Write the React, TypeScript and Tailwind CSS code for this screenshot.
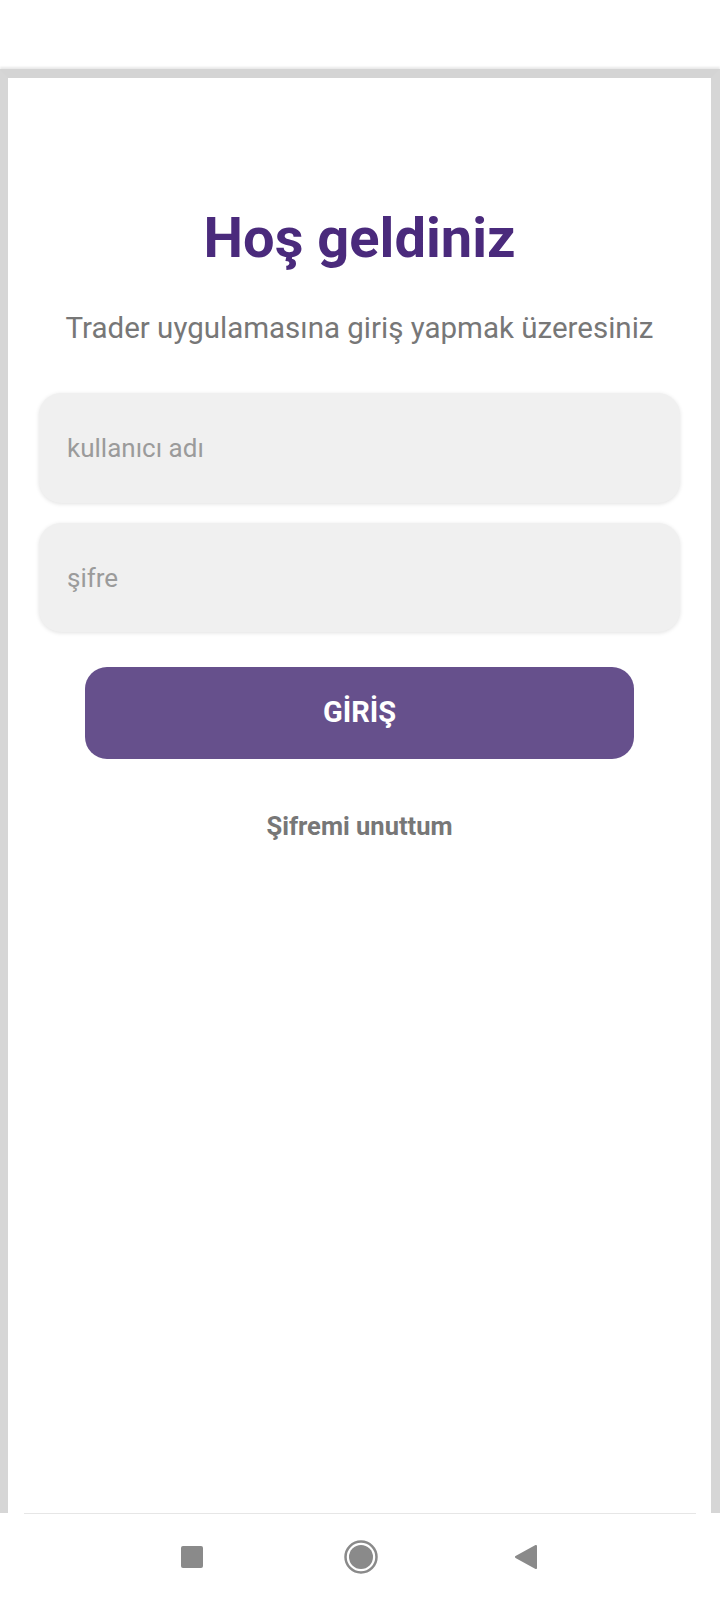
const App = () => {
  return (
    <div className="flex h-[1600px] w-[720px] flex-col bg-white font-['Roboto',sans-serif]">
      <div className="h-[69px] shrink-0 bg-white" />

      {/* device frame */}
      <div className="flex flex-1 flex-col border-x-[8px] border-t-[9px] border-r-[9px] border-x-[#d6d6d6] border-t-[#d4d4d4] bg-white shadow-[0_-2px_2px_#e9e9e9]">
        <div className="flex flex-col items-center pt-[128px]">
          <h1 className="text-[56px] font-bold leading-[64px] text-[#4a2a7c]">Hoş geldiniz</h1>
          <p className="mt-[40px] text-[29.5px] leading-[36px] text-[#777777]">
            Trader uygulamasına giriş yapmak üzeresiniz
          </p>
        </div>

        <div className="mt-[47px] flex flex-col gap-[20px] px-[31px]">
          <input
            placeholder="kullanıcı adı"
            className="h-[110px] w-full rounded-[22px] bg-[#f0f0f0] px-[28px] text-[26px] text-[#333] shadow-[0_1px_4px_rgba(0,0,0,0.12)] outline-none placeholder:text-[#9b9b9b]"
          />
          <input
            placeholder="şifre"
            type="text"
            className="h-[109px] w-full rounded-[22px] bg-[#f0f0f0] px-[28px] text-[26px] text-[#333] shadow-[0_1px_4px_rgba(0,0,0,0.12)] outline-none placeholder:text-[#9b9b9b]"
          />
        </div>

        <div className="mt-[35px] px-[77px]">
          <button className="flex h-[92px] w-full items-center justify-center rounded-[22px] bg-[#66508c] text-[29px] font-bold text-white">
            GİRİŞ
          </button>
        </div>

        <p className="mt-[52px] text-center text-[25.5px] font-bold leading-[30px] text-[#777777]">
          Şifremi unuttum
        </p>
      </div>

      {/* system nav bar */}
      <div className="h-[87px] shrink-0 bg-white px-[24px]">
        <div className="h-px bg-[#e6e6e6]" />
        <div className="flex h-[86px] items-center pl-[157px]">
          <div className="h-[22px] w-[22px] rounded-[2px] bg-[#8a8a8a]" />
          <svg className="ml-[141px]" width="34" height="34" viewBox="0 0 34 34">
            <circle cx="17" cy="17" r="15.5" fill="none" stroke="#8a8a8a" strokeWidth="2.5" />
            <circle cx="17" cy="17" r="12" fill="#8a8a8a" />
          </svg>
          <svg className="ml-[136px]" width="24" height="26" viewBox="0 0 24 26">
            <path d="M22 2 L2 13 L22 24 Z" fill="#8a8a8a" stroke="#8a8a8a" strokeWidth="2" strokeLinejoin="round" />
          </svg>
        </div>
      </div>
    </div>
  );
};

export default App;
